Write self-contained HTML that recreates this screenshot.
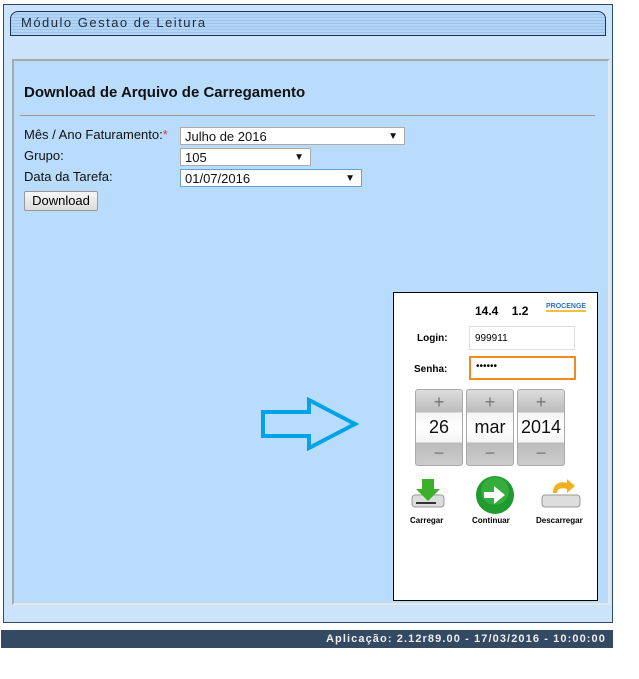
<!DOCTYPE html>
<html><head><meta charset="utf-8"><style>
body{margin:0;width:639px;height:679px;background:#fff;font-family:"Liberation Sans",sans-serif;position:relative;overflow:hidden}
.a{position:absolute}
.outer{left:3px;top:4px;width:608px;height:617px;background:#cce4fb;border:1px solid #2f4b6b}
.hdr{left:10px;top:11px;border:1px solid #1f3550;border-radius:8px 8px 0 0;background:repeating-linear-gradient(#b3d4f5 0 2px,#9cc4ec 2px 3px);font-size:13px;letter-spacing:1.5px;color:#1b2a3c;line-height:22px;padding-left:10px;box-sizing:border-box;width:596px;height:25px}
.inner{left:12px;top:59px;width:598px;height:546px;background:#b9dcfd;border:2px solid #aaa;border-right-color:#e8e8e8;border-bottom-color:#e8e8e8;box-sizing:border-box}
h1{position:absolute;left:24px;top:84px;margin:0;font-size:15px;font-weight:bold;color:#111}
.hr{left:20px;top:115px;width:575px;height:1px;background:#999}
.lbl{font-size:13px;color:#111}
.sel{background:#fff;border:1px solid #aaa;font-size:13px;color:#111;height:18px;line-height:18px;padding-left:4px;box-sizing:border-box}
.sel span{position:absolute;right:6px;top:0;font-size:10px}
.btn{left:24px;top:191px;width:74px;height:20px;border:1px solid #999;border-radius:2px;background:linear-gradient(#f6f6f6,#ddd);font-size:13px;text-align:center;line-height:18px;box-sizing:border-box}
.ph{left:393px;top:292px;width:205px;height:309px;background:#fff;border:1px solid #000;box-sizing:border-box}
.sp{width:48px;height:77px;border-radius:3px;background:linear-gradient(#ddd,#bbb 30%,#f4f4f4 30%,#fff 50%,#f4f4f4 70%,#bbb 70%,#ccc);border:1px solid #aaa;box-sizing:border-box;text-align:center;font-size:18px;color:#111}
.foot{left:1px;top:630px;width:612px;height:18px;background:#344a63;color:#eee;font-size:11px;font-weight:bold;letter-spacing:1.1px;text-align:right;line-height:18px;padding-right:7px;box-sizing:border-box}
</style></head><body>
<div class="a outer"></div>
<div class="a hdr">Módulo Gestao de Leitura</div>
<div class="a inner"></div>
<h1>Download de Arquivo de Carregamento</h1>
<div class="a hr"></div>
<div class="a lbl" style="left:24px;top:127px">Mês / Ano Faturamento:<span style="color:#e33">*</span></div>
<div class="a sel" style="left:180px;top:127px;width:225px">Julho de 2016<span>▼</span></div>
<div class="a lbl" style="left:24px;top:148px">Grupo:</div>
<div class="a sel" style="left:180px;top:148px;width:131px">105<span>▼</span></div>
<div class="a lbl" style="left:24px;top:169px">Data da Tarefa:</div>
<div class="a sel" style="left:180px;top:169px;width:182px;border-color:#6aa0d8">01/07/2016<span>▼</span></div>
<div class="a btn">Download</div>
<svg class="a" style="left:255px;top:395px" width="110" height="60"><path d="M8 17H54V5L100 29L54 53V41H8Z" fill="none" stroke="#00a2e8" stroke-width="4" stroke-linejoin="miter"/></svg>
<div class="a ph">
<div class="a" style="left:81px;top:11px;font-size:12px;font-weight:bold">14.4 &nbsp;&nbsp; 1.2</div>
<div class="a" style="left:152px;top:10px;font-size:7px;font-weight:bold;color:#3070c0;border-bottom:2px solid #f0c040">PROCENGE</div>
<div class="a" style="left:23px;top:40px;font-size:10px;font-weight:bold">Login:</div>
<div class="a" style="left:75px;top:33px;width:106px;height:24px;border:1px solid #ddd;font-size:10px;line-height:24px;padding-left:5px;box-sizing:border-box">999911</div>
<div class="a" style="left:20px;top:71px;font-size:10px;font-weight:bold">Senha:</div>
<div class="a" style="left:75px;top:63px;width:107px;height:24px;border:2px solid #f08c1e;font-size:10px;line-height:18px;padding-left:5px;box-sizing:border-box">••••••</div>
<div class="a sp" style="left:21px;top:96px"><div style="height:25px;line-height:25px;color:#777">+</div><div style="height:26px;line-height:24px">26</div><div style="color:#777;line-height:24px">−</div></div>
<div class="a sp" style="left:72px;top:96px"><div style="height:25px;line-height:25px;color:#777">+</div><div style="height:26px;line-height:24px">mar</div><div style="color:#777;line-height:24px">−</div></div>
<div class="a sp" style="left:123px;top:96px"><div style="height:25px;line-height:25px;color:#777">+</div><div style="height:26px;line-height:24px">2014</div><div style="color:#777;line-height:24px">−</div></div>
<svg class="a" style="left:14px;top:184px" width="40" height="34"><rect x="4" y="18" width="32" height="12" rx="3" fill="#ddd" stroke="#999"/><rect x="8" y="25" width="20" height="2" fill="#333"/><path d="M14 2H26V12H32L20 24L8 12H14Z" fill="#3cb02c"/></svg>
<svg class="a" style="left:81px;top:182px" width="40" height="40"><circle cx="20" cy="20" r="19" fill="#1e9a2e"/><circle cx="20" cy="16" r="14" fill="#4cc04a" opacity=".5"/><path d="M9 17H19V11L30 20L19 29V23H9Z" fill="#fff"/></svg>
<svg class="a" style="left:145px;top:184px" width="44" height="34"><rect x="3" y="18" width="38" height="12" rx="3" fill="#ddd" stroke="#999"/><path d="M14 16C14 6 22 4 28 6V2L36 9L28 16V12C22 10 18 12 18 16Z" fill="#f0b020"/></svg>
<div class="a" style="left:16px;top:223px;font-size:8px;font-weight:bold">Carregar</div>
<div class="a" style="left:78px;top:223px;font-size:8px;font-weight:bold">Continuar</div>
<div class="a" style="left:142px;top:223px;font-size:8px;font-weight:bold">Descarregar</div>
</div>
<div class="a foot">Aplicação: 2.12r89.00 - 17/03/2016 - 10:00:00</div>
</body></html>
